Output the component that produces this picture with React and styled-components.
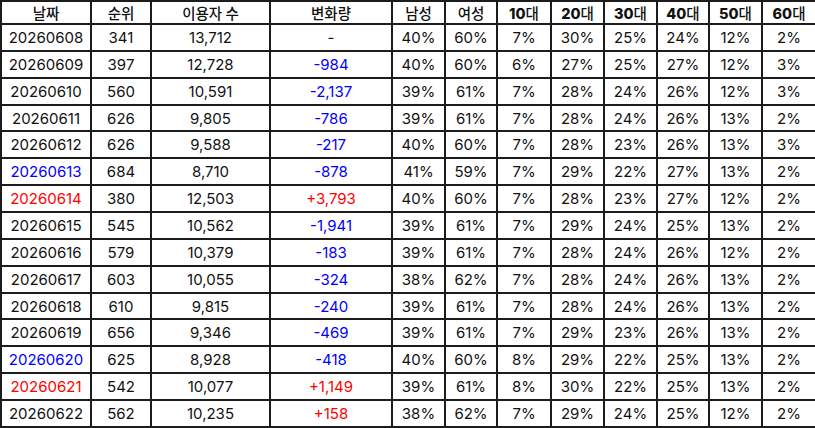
import React from "react";
import styled, { createGlobalStyle } from "styled-components";

const GlobalStyle = createGlobalStyle`
  html, body {
    margin: 0;
    padding: 0;
    background: #fff;
  }
`;

const Table = styled.table`
  width: 815px;
  height: 428px;
  table-layout: fixed;
  border-collapse: collapse;
  font-family: Inter, "Noto Sans CJK KR", sans-serif;
  font-size: 15px;
  color: #111;
`;

const Head = styled.th`
  border: 2px solid #1c1c1c;
  font-family: "Noto Sans CJK KR", sans-serif;
  font-weight: 500;
  font-size: 14.5px;
  text-align: center;
  padding: 0;
  background: #fff;
`;

const Num = styled.span`
  font-family: Inter, sans-serif;
  font-weight: 800;
`;

const Cell = styled.td`
  border: 2px solid #1c1c1c;
  text-align: center;
  padding: 0;
  white-space: nowrap;
  color: ${(p) => (p.$tone === "red" ? "#ff0000" : p.$tone === "blue" ? "#0000ff" : "#111")};
`;

const widths = [90, 60, 119, 122, 53, 52, 54, 53, 53, 52, 53, 54];

const rows = [
  ["20260608", 341, 13712, 40, 60, 7, 30, 25, 24, 12, 2],
  ["20260609", 397, 12728, 40, 60, 6, 27, 25, 27, 12, 3],
  ["20260610", 560, 10591, 39, 61, 7, 28, 24, 26, 12, 3],
  ["20260611", 626, 9805, 39, 61, 7, 28, 24, 26, 13, 2],
  ["20260612", 626, 9588, 40, 60, 7, 28, 23, 26, 13, 3],
  ["20260613", 684, 8710, 41, 59, 7, 29, 22, 27, 13, 2, "blue"],
  ["20260614", 380, 12503, 40, 60, 7, 28, 23, 27, 12, 2, "red"],
  ["20260615", 545, 10562, 39, 61, 7, 29, 24, 25, 13, 2],
  ["20260616", 579, 10379, 39, 61, 7, 28, 24, 26, 12, 2],
  ["20260617", 603, 10055, 38, 62, 7, 28, 24, 26, 13, 2],
  ["20260618", 610, 9815, 39, 61, 7, 28, 24, 26, 13, 2],
  ["20260619", 656, 9346, 39, 61, 7, 29, 23, 26, 13, 2],
  ["20260620", 625, 8928, 40, 60, 8, 29, 22, 25, 13, 2, "blue"],
  ["20260621", 542, 10077, 39, 61, 8, 30, 22, 25, 13, 2, "red"],
  ["20260622", 562, 10235, 38, 62, 7, 29, 24, 25, 12, 2],
];

const fmt = (n) => n.toLocaleString("en-US");

function App() {
  return (
    <>
      <GlobalStyle />
      <Table>
        <colgroup>
          {widths.map((w, i) => (
            <col key={i} style={{ width: w }} />
          ))}
        </colgroup>
        <thead>
          <tr>
            <Head>날짜</Head>
            <Head>순위</Head>
            <Head>이용자 수</Head>
            <Head>변화량</Head>
            <Head>남성</Head>
            <Head>여성</Head>
            {["10", "20", "30", "40", "50", "60"].map((a) => (
              <Head key={a}>
                <Num>{a}</Num>대
              </Head>
            ))}
          </tr>
        </thead>
        <tbody>
          {rows.map((r, i) => {
            const [date, rank, users, male, female, ...ages] = r.slice(0, 11);
            const tone = r[11];
            const prev = i > 0 ? rows[i - 1][2] : null;
            const diff = prev === null ? null : users - prev;
            return (
              <tr key={date}>
                <Cell $tone={tone}>{date}</Cell>
                <Cell>{rank}</Cell>
                <Cell>{fmt(users)}</Cell>
                {diff === null ? (
                  <Cell>-</Cell>
                ) : (
                  <Cell $tone={diff > 0 ? "red" : "blue"}>
                    {diff > 0 ? "+" : "-"}
                    {fmt(Math.abs(diff))}
                  </Cell>
                )}
                <Cell>{male}%</Cell>
                <Cell>{female}%</Cell>
                {ages.map((a, j) => (
                  <Cell key={j}>{a}%</Cell>
                ))}
              </tr>
            );
          })}
        </tbody>
      </Table>
    </>
  );
}

export default App;
